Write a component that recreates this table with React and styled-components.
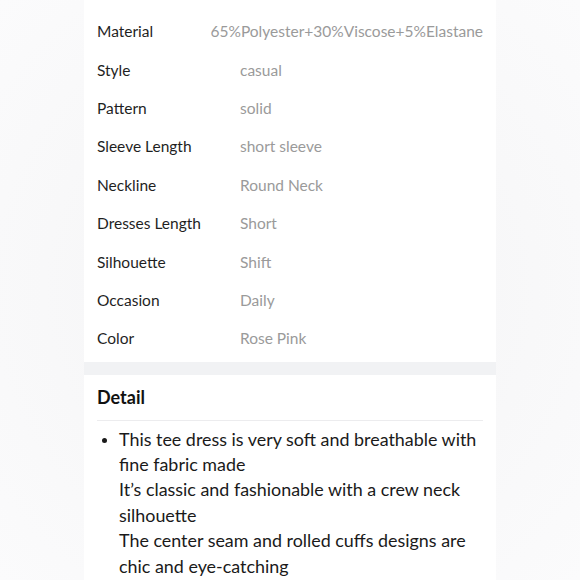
import React from "react";
import styled, { createGlobalStyle } from "styled-components";

const Global = createGlobalStyle`
  html, body { margin: 0; padding: 0; }
  body {
    width: 580px;
    height: 580px;
    overflow: hidden;
    background: #f6f6f7;
    font-family: "Lato", "Noto Sans", sans-serif;
    -webkit-font-smoothing: antialiased;
  }
`;

const Page = styled.div`
  width: 580px;
  height: 580px;
  display: flex;
  justify-content: center;
  align-items: flex-start;
  background: radial-gradient(ellipse at 50% 50%, #f3f3f5 0%, #f8f8f9 60%, #fbfbfc 100%);
`;

const Column = styled.div`
  width: 412px;
  flex-shrink: 0;
  display: flex;
  flex-direction: column;
  background: #f1f2f4;
`;

const Panel = styled.section`
  flex-shrink: 0;
  background: #ffffff;
  padding: ${(p) => p.$pad};
`;

const Spacer = styled.div`
  flex-shrink: 0;
  height: 13px;
  background: #f1f2f4;
`;

const Row = styled.div`
  display: flex;
  align-items: center;
  height: 38.4px;
  font-size: 15.5px;
`;

const Label = styled.div`
  width: 143px;
  flex-shrink: 1;
  min-width: 0;
  color: #1f1f1f;
  white-space: nowrap;
`;

const Value = styled.div`
  color: #9a9a9a;
  white-space: nowrap;
`;

const Heading = styled.h3`
  margin: 0;
  font-size: 18px;
  font-weight: 700;
  color: #111;
  line-height: 22px;
  padding-bottom: 12px;
  border-bottom: 1px solid #ececee;
`;

const List = styled.ul`
  margin: 0;
  padding: 6px 0 0 22px;
  list-style: disc;
  font-size: 17.9px;
  line-height: 25.4px;
  color: #1a1a1a;

  li::marker { font-size: 15px; }
`;

const specs = [
  ["Material", "65%Polyester+30%Viscose+5%Elastane"],
  ["Style", "casual"],
  ["Pattern", "solid"],
  ["Sleeve Length", "short sleeve"],
  ["Neckline", "Round Neck"],
  ["Dresses Length", "Short"],
  ["Silhouette", "Shift"],
  ["Occasion", "Daily"],
  ["Color", "Rose Pink"],
];

export default function App() {
  return (
    <>
      <Global />
      <Page>
        <Column>
          <Panel $pad="12px 13px 4px 13px">
            {specs.map(([k, v]) => (
              <Row key={k}>
                <Label>{k}</Label>
                <Value>{v}</Value>
              </Row>
            ))}
          </Panel>
          <Spacer />
          <Panel $pad="11px 13px 20px 13px">
            <Heading>Detail</Heading>
            <List>
              <li>
                This tee dress is very soft and breathable with fine fabric made
                <br />
                It’s classic and fashionable with a crew neck silhouette
                <br />
                The center seam and rolled cuffs designs are chic and eye-catching
              </li>
            </List>
          </Panel>
        </Column>
      </Page>
    </>
  );
}
